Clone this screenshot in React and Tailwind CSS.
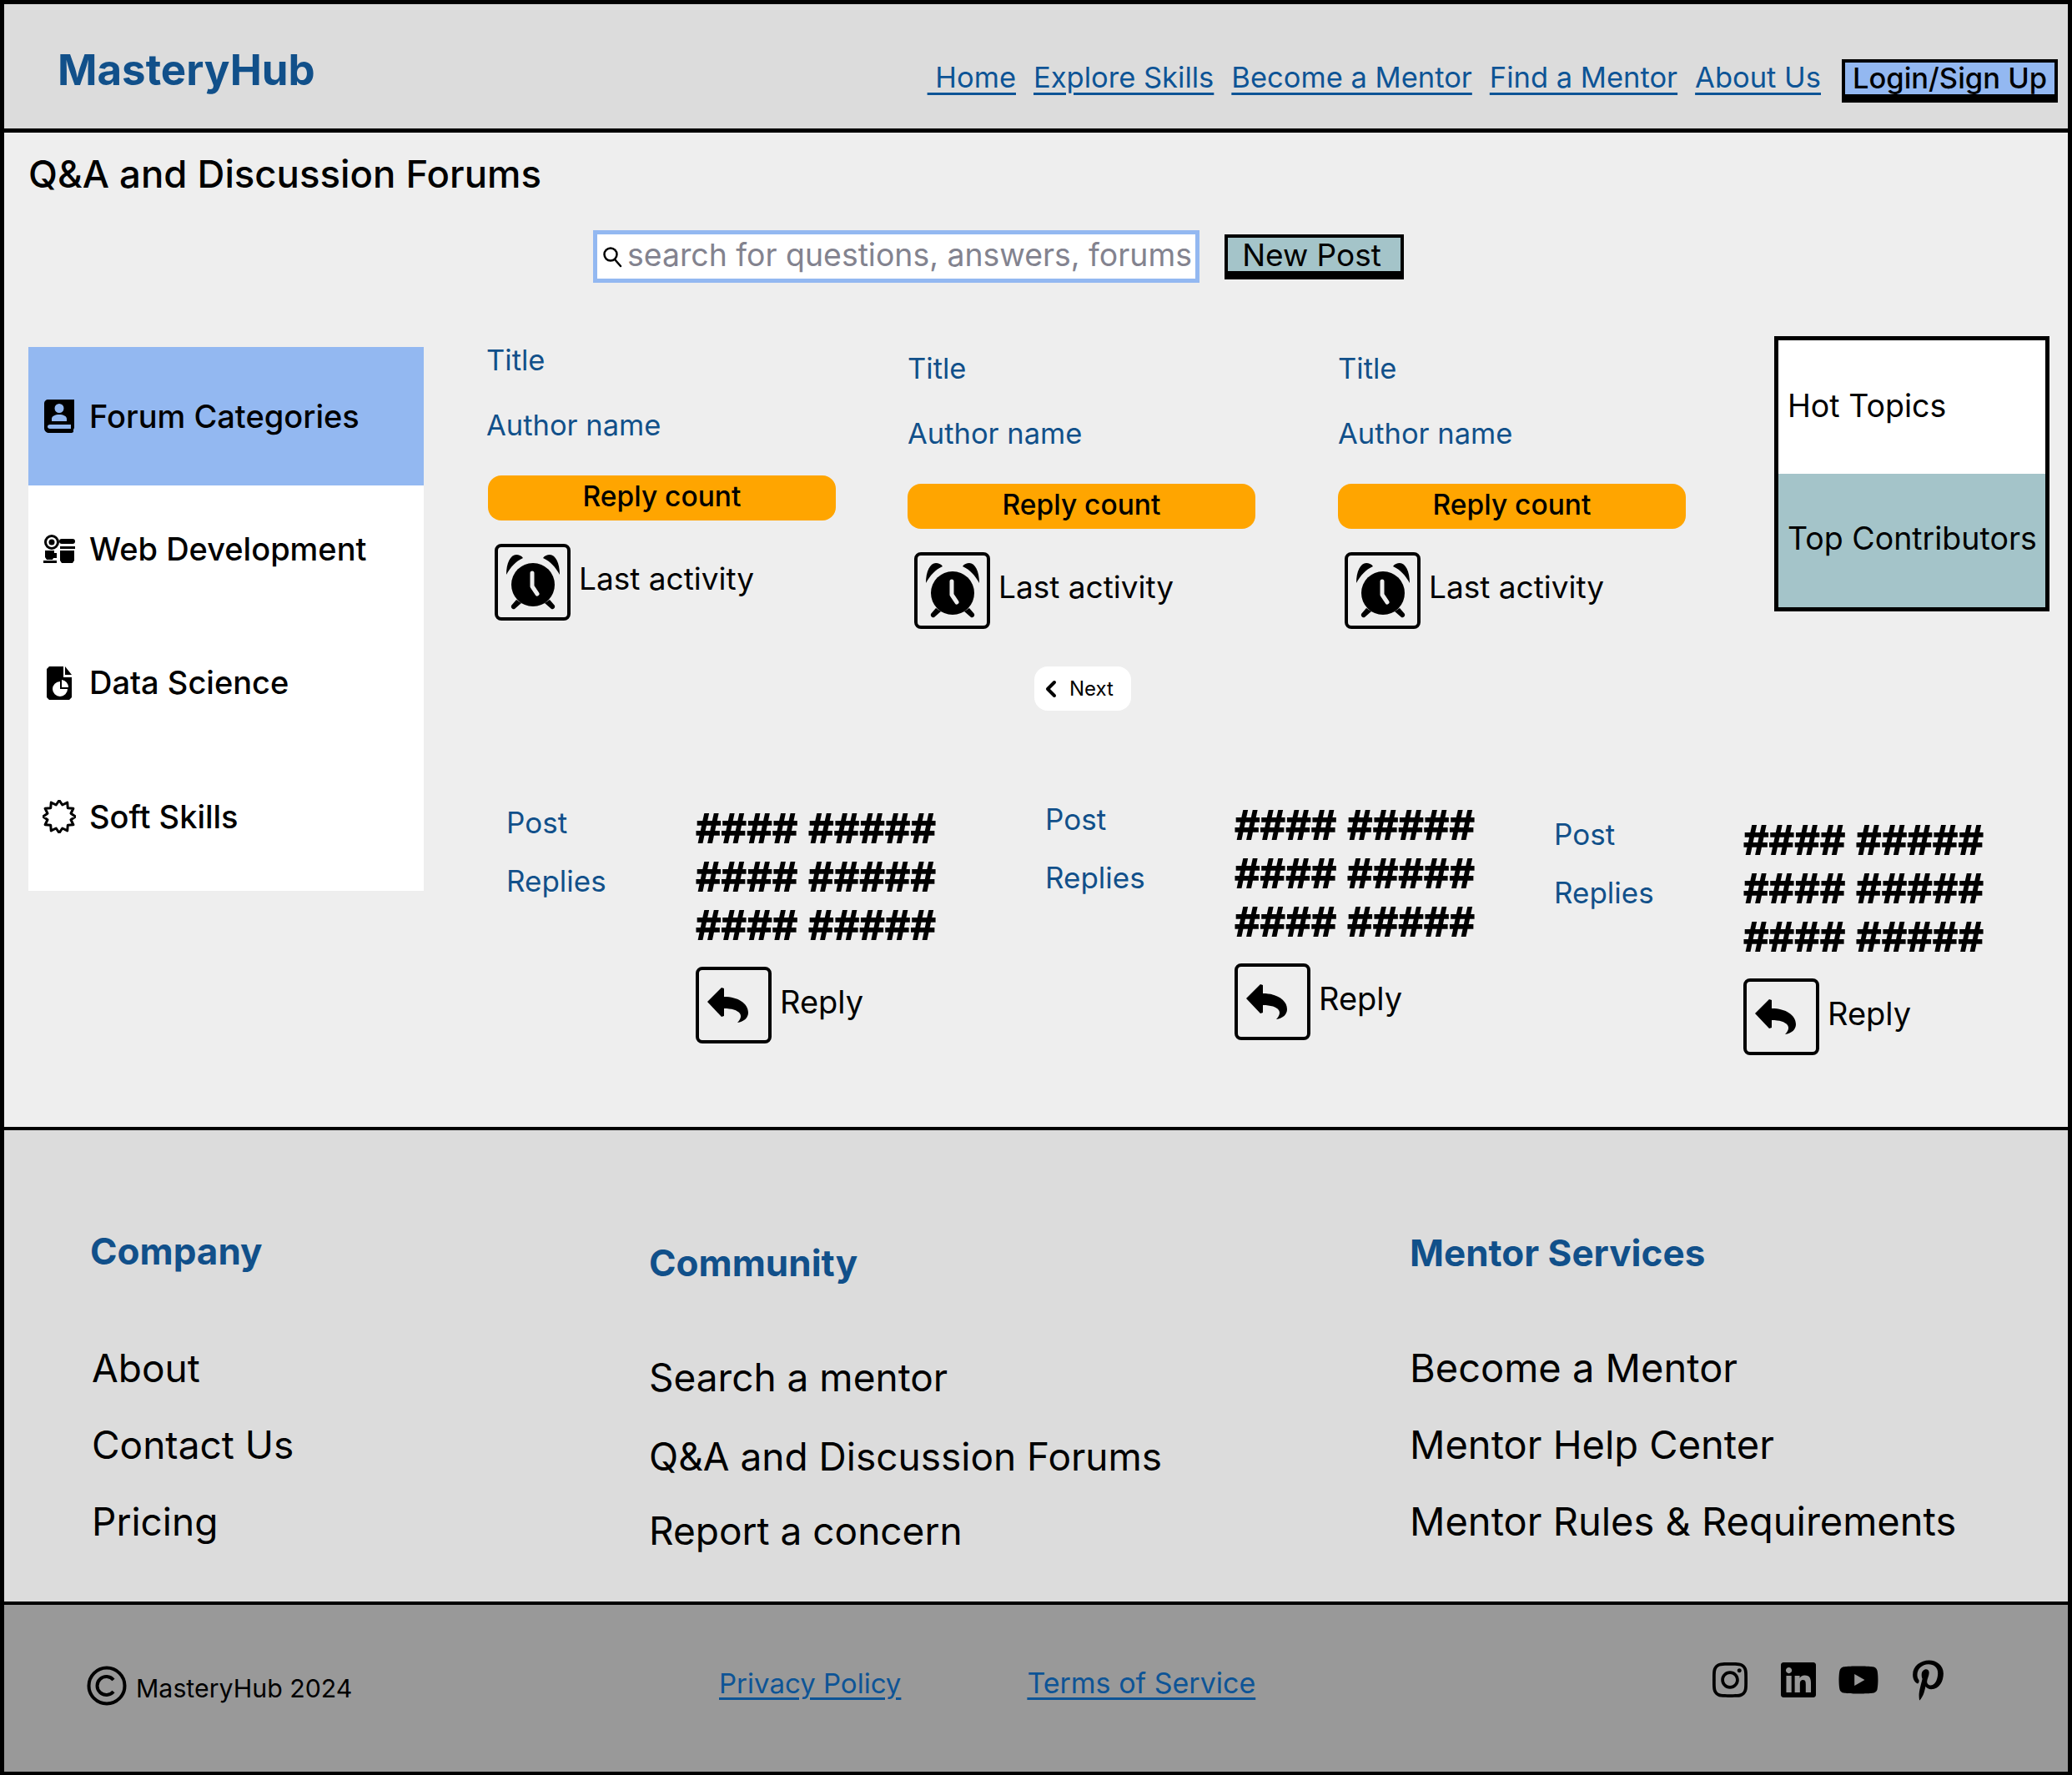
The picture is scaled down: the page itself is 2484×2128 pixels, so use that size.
import { ChevronLeft } from "lucide-react"
import { FaInstagram, FaLinkedin, FaYoutube, FaPinterestP } from "react-icons/fa"

const navLinks = ["\u00a0Home", "Explore Skills", "Become a Mentor", "Find a Mentor", "About Us"]

function BookIcon() {
  return (
    <svg viewBox="0 0 36 40" className="w-[36px] h-[40px]">
      <path fill="#000" fillRule="evenodd" d="M5 0h31v34l-1 2v3l-2 1H6c-3 0-6-2-6-6V5c0-3 2-5 5-5zm13 5a5.500 5.500 0 100 11 5.500 5.500 0 000-11zM9 26h18v-3c0-3-4-5-9-5s-9 2-9 5v3zM7 30c-2 0-3 1-3 2.500S5 35 7 35h25v-5H7z" />
    </svg>
  )
}

function WebIcon() {
  return (
    <svg viewBox="0 0 38 36" className="w-[38px] h-[36px]">
      <circle cx="10" cy="10" r="7.500" fill="none" stroke="#000" strokeWidth="3" />
      <circle cx="10" cy="10" r="3.500" fill="#000" />
      <rect x="19" y="6" width="19" height="6" rx="3" fill="#000" />
      <rect x="20" y="15" width="18" height="3" fill="#000" />
      <path fill="#000" d="M20 20h17v12l-2 3H22l-2-3zM2 20h11v3h3v6h-4l-1 2H4l-2-3z" />
      <rect x="0" y="32" width="16" height="3" fill="#000" />
    </svg>
  )
}

function FileIcon() {
  return (
    <svg viewBox="0 0 30 40" className="w-[30px] h-[40px]">
      <path fill="#000" fillRule="evenodd" d="M3 0h17v13h10v24l-3 3H3l-3-3V3zM16 18a9 9 0 109 9h-9zM18 16v9h8a9 9 0 00-8-9z" />
      <path fill="#000" d="M22 0l8 10h-8z" />
    </svg>
  )
}

function BurstIcon() {
  const pts = []
  for (let i = 0; i < 24; i++) {
    const r = i % 2 === 0 ? 19.500 : 14.500
    const a = (i * Math.PI) / 12
    pts.push(`${20 + r * Math.cos(a)},${20 + r * Math.sin(a)}`)
  }
  return (
    <svg viewBox="0 0 40 40" className="w-[40px] h-[40px]">
      <polygon points={pts.join(" ")} fill="none" stroke="#000" strokeWidth="3" strokeLinejoin="round" />
    </svg>
  )
}

function SearchGlyph() {
  return (
    <svg viewBox="0 0 24 26" className="w-[24px] h-[26px] shrink-0">
      <circle cx="10" cy="10" r="7.500" fill="none" stroke="#000" strokeWidth="2.500" />
      <path d="M15 16l7 8" stroke="#000" strokeWidth="2.500" strokeLinecap="round" />
    </svg>
  )
}

function AlarmBox() {
  return (
    <div className="w-[91px] h-[92px] border-[4px] border-black rounded-[8px] flex items-center justify-center shrink-0">
      <svg viewBox="0 0 64 66" className="w-[64px] h-[66px]">
        <circle cx="32" cy="36" r="26" fill="#000" />
        <path fill="#000" d="M0 24C0 10 5 0 12 0c3 0 6 1 8 4C11 8 5 15 0 24zM64 24C64 10 59 0 52 0c-3 0-6 1-8 4 9 4 15 11 20 20zM12 54l-6 7c-1 3 2 5 4 4l8-7zM52 54l6 7c1 3-2 5-4 4l-8-7z" />
        <path d="M31 22v16l6 9" fill="none" stroke="#eee" strokeWidth="5" strokeLinecap="round" strokeLinejoin="round" />
      </svg>
    </div>
  )
}

function ReplyBox() {
  return (
    <div className="w-[91px] h-[92px] border-[4px] border-black rounded-[8px] flex items-center pl-[10px] shrink-0">
      <svg viewBox="0 0 49 42" className="w-[49px] h-[42px]">
        <path fill="#000" d="M0 17L17 0l3 1v10c17 0 29 8 29 19 0 6-5 11-13 12 4-4 5-8 3-11-3-4-10-6-19-6v9l-3 1z" />
      </svg>
    </div>
  )
}

function ForumCard({ offset, textShift = "" }) {
  return (
    <div className={`w-[417px] text-[#11508a] ${offset}`}>
      <p className={`text-[34.500px] leading-[42px] ${textShift}`}>Title</p>
      <p className={`text-[34.500px] leading-[42px] mt-[36px] ${textShift}`}>Author name</p>
      <div className="mt-[39px] h-[54px] pb-[3px] rounded-[16px] bg-[#ffa500] text-black text-[33.500px] font-medium flex items-center justify-center">
        Reply count
      </div>
      <div className="mt-[28px] ml-[8px] flex items-center gap-[10px] text-black text-[37px]">
        <AlarmBox />
        <span className="-mt-[8px]">Last activity</span>
      </div>
    </div>
  )
}

function PostBlock({ offset }) {
  return (
    <div className={`flex ${offset}`}>
      <div className="w-[227px] text-[#11508a] text-[35px]">
        <p className="leading-[42px]">Post</p>
        <p className="leading-[42px] mt-[28px]">Replies</p>
      </div>
      <div>
        <div className="pt-[3px] font-['Liberation_Mono',monospace] font-bold text-[51px] leading-[58px] [word-spacing:-18px] [-webkit-text-stroke:2px_black] text-black whitespace-nowrap">
          <p>#### #####</p>
          <p>#### #####</p>
          <p>#### #####</p>
        </div>
        <div className="mt-[17px] flex items-center gap-[10px] text-black text-[38px]">
          <ReplyBox />
          <span className="-mt-[8px]">Reply</span>
        </div>
      </div>
    </div>
  )
}

function SideRow({ icon, label, active, h }) {
  return (
    <div className={`flex items-center ${h} ${active ? "bg-[#93b8f1]" : "bg-white"}`}>
      <div className="w-[73px] flex justify-center shrink-0">{icon}</div>
      <span className="text-[38px] text-black font-[450]">{label}</span>
    </div>
  )
}

function FooterCol({ title, links, offset, listGap, size, gaps }) {
  return (
    <div className={offset}>
      <h4 className="text-[44px] leading-[56px] font-bold text-[#11508a]">{title}</h4>
      <div className={listGap}>
        {links.map((l, i) => (
          <p key={l} className={`leading-[56px] text-black whitespace-nowrap ${size} ${gaps[i]}`}>{l}</p>
        ))}
      </div>
    </div>
  )
}

export default function App() {
  return (
    <div className="w-[2484px] h-[2128px] flex flex-col bg-white font-['Inter',sans-serif] overflow-hidden">
      {/* Header */}
      <header className="h-[159px] shrink-0 flex justify-between bg-[#dcdcdc] border-[5px] border-black pl-[64px] pr-[12px]">
        <div className="pt-[48px] text-[51px] leading-[62px] font-bold text-[#11508a]">MasteryHub</div>
        <nav className="flex items-start pt-[66px]">
          {navLinks.map((link, i) => (
            <a key={link} className={`text-[34.500px] leading-[44px] text-[#0d5496] underline underline-offset-[6px] decoration-[3px] ${i === 0 ? "" : "ml-[21px]"}`}>
              {link}
            </a>
          ))}
          <button className="ml-[25px] h-[52px] w-[259px] bg-[#93b8f1] border-[4px] border-b-[10px] border-black text-[34.500px] leading-none text-black font-medium">
            Login/Sign Up
          </button>
        </nav>
      </header>

      {/* Main content */}
      <main className="h-[1196px] shrink-0 bg-[#eeeeee] border-x-[5px] border-b-[4px] border-black px-[29px]">
        <h1 className="pt-[22px] text-[45.500px] leading-[56px] font-medium text-black">Q&amp;A and Discussion Forums</h1>

        <div className="mt-[39px] ml-[677px] flex items-start">
          <div className="w-[727px] h-[63px] bg-white border-[5px] border-[#93b8f1] flex items-center pl-[6px] gap-[6px]">
            <SearchGlyph />
            <span className="-mt-[3px] text-[37.400px] text-[#83838f] whitespace-nowrap">search for questions, answers, forums</span>
          </div>
          <button className="ml-[30px] mt-[5px] w-[215px] h-[54px] pr-[6px] bg-[#a4c4c9] border-[4px] border-b-[10px] border-black text-[37px] leading-none text-black">
            New Post
          </button>
        </div>

        <div className="flex mt-[64px]">
          {/* Categories */}
          <aside className="w-[474px] shrink-0 self-start mt-[13px]">
            <SideRow icon={<BookIcon />} label="Forum Categories" active h="h-[166px]" />
            <SideRow icon={<WebIcon />} label="Web Development" h="h-[162px] pb-[10px]" />
            <SideRow icon={<FileIcon />} label="Data Science" h="h-[162px] pb-[13px]" />
            <SideRow icon={<BurstIcon />} label="Soft Skills" h="h-[162px] pb-[16px]" />
          </aside>

          <div className="ml-[77px] flex-1">
            <div className="grid grid-cols-[503px_516px_523px_330px]">
              <ForumCard offset="pt-[8px]" textShift="-ml-[2px]" />
              <ForumCard offset="pt-[18px]" />
              <ForumCard offset="pt-[18px]" />
              {/* Hot topics box */}
              <div className="h-[330px] border-[5px] border-black flex flex-col text-[37.500px] text-black">
                <div className="h-[160px] pb-[2px] bg-white flex items-center pl-[11px]">Hot Topics</div>
                <div className="flex-1 bg-[#a4c4c9] flex items-center pl-[11px] pb-[3px] whitespace-nowrap">Top Contributors</div>
              </div>
            </div>

            <div className="mt-[45px] ml-[655px] w-[116px] h-[53px] bg-white rounded-[16px] flex items-center text-[24px] text-black pl-[4px]">
              <ChevronLeft className="w-[32px] h-[32px]" strokeWidth={3} />
              <span className="ml-[6px]">Next</span>
            </div>

            <div className="mt-[113px] ml-[22px] grid grid-cols-[646px_610px_1fr]">
              <PostBlock offset="" />
              <PostBlock offset="-mt-[4px]" />
              <PostBlock offset="mt-[14px]" />
            </div>
          </div>
        </div>
      </main>

      {/* Footer links */}
      <section className="h-[569px] shrink-0 bg-[#dcdcdc] border-x-[5px] border-b-[4px] border-black pl-[103px] grid grid-cols-[670px_912px_1fr]">
        <FooterCol offset="pt-[117px]" listGap="mt-[84px] ml-[2px]" size="text-[46px]" title="Company" links={["About", "Contact Us", "Pricing"]} gaps={["", "mt-[36px]", "mt-[36px]"]} />
        <FooterCol offset="pt-[131px]" listGap="mt-[81px]" size="text-[46px]" title="Community" links={["Search a mentor", "Q&A and Discussion Forums", "Report a concern"]} gaps={["", "mt-[39px]", "mt-[33px]"]} />
        <FooterCol offset="pt-[119px]" listGap="mt-[82px]" size="text-[47px]" title="Mentor Services" links={["Become a Mentor", "Mentor Help Center", "Mentor Rules & Requirements"]} gaps={["", "mt-[36px]", "mt-[36px]"]} />
      </section>

      {/* Bottom bar */}
      <footer className="flex-1 bg-[#999999] border-x-[5px] border-b-[4px] border-black flex items-start pl-[99px]">
        <div className="w-[758px] flex items-center pt-[71px]">
          <svg viewBox="0 0 48 48" className="w-[48px] h-[48px]">
            <circle cx="24" cy="24" r="21.500" fill="none" stroke="#000" strokeWidth="4" />
            <path d="M32 17a11 11 0 100 14" fill="none" stroke="#000" strokeWidth="4" />
          </svg>
          <span className="ml-[11px] mt-[7px] text-[30.300px] text-black">MasteryHub 2024</span>
        </div>
        <a className="pt-[72px] text-[33px] leading-[44px] text-[#0d5496] underline underline-offset-[5px]">Privacy Policy</a>
        <a className="ml-[151px] pt-[72px] text-[34px] leading-[44px] text-[#0d5496] underline underline-offset-[5px]">Terms of Service</a>
        <div className="ml-auto mr-[149px] mt-[66px] h-[48px] flex items-center text-black">
          <FaInstagram className="w-[48px] h-[48px]" />
          <FaLinkedin className="ml-[34px] w-[48px] h-[48px]" />
          <FaYoutube className="ml-[23px] w-[50px] h-[44px]" />
          <FaPinterestP className="ml-[40px] w-[37px] h-[49px]" />
        </div>
      </footer>
    </div>
  )
}
